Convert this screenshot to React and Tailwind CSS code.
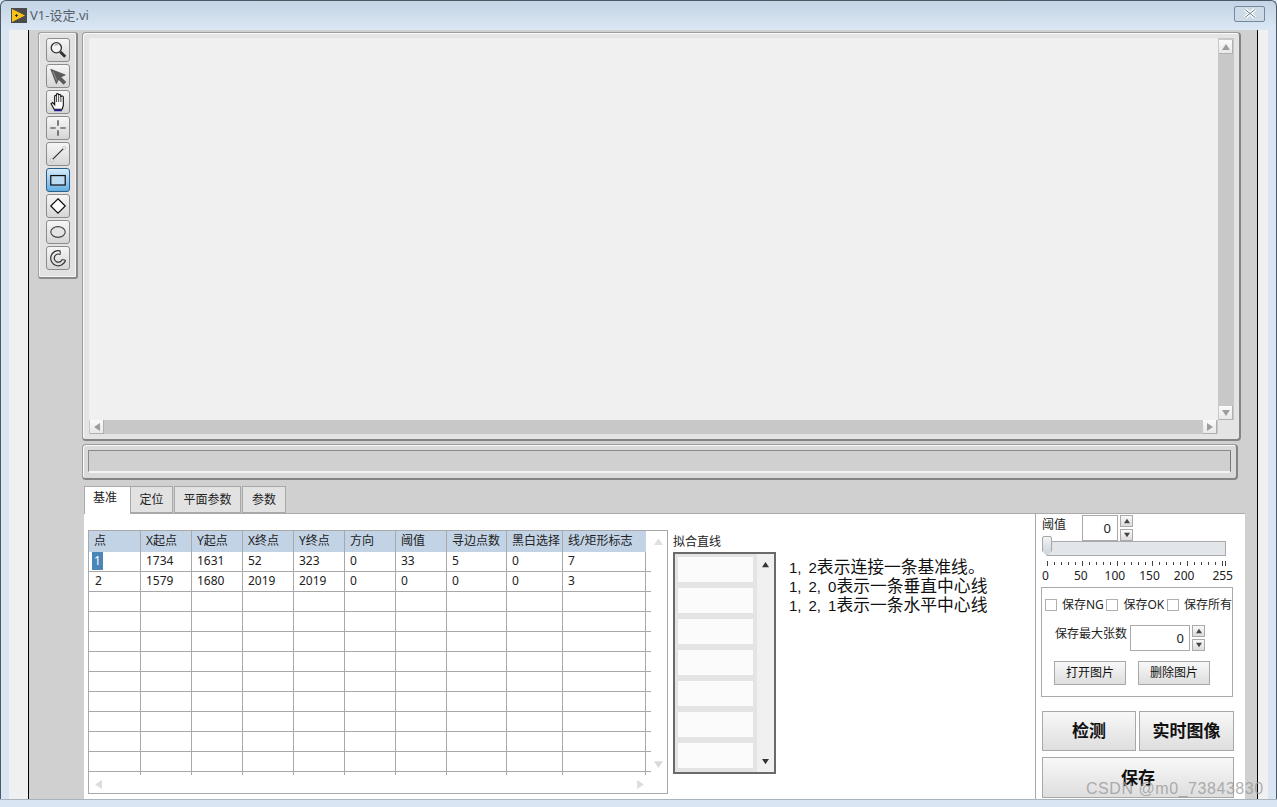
const ui = "font-['Noto_Sans','Noto_Sans_CJK_SC',sans-serif]";
const colsClass = "grid grid-cols-[52px_51px_51px_51px_51px_51px_51px_60px_56px_83px_3px]";
const header = ["点", "X起点", "Y起点", "X终点", "Y终点", "方向", "阈值", "寻边点数", "黑白选择", "线/矩形标志", ""];
const rows = [
  ["1", "1734", "1631", "52", "323", "0", "33", "5", "0", "7", ""],
  ["2", "1579", "1680", "2019", "2019", "0", "0", "0", "0", "3", ""],
  ...Array.from({ length: 9 }, () => Array(11).fill("")),
];

const Tool = ({ active, children }) => (
  <div className={`w-6 h-6 rounded-[3px] border flex items-center justify-center ${active ? "border-[#2a5f8a] bg-gradient-to-b from-[#d6ecfa] to-[#62aee4]" : "border-[#8c8c8c] bg-gradient-to-b from-[#f6f6f6] to-[#d6d6d6]"}`}>
    <svg width="20" height="20" viewBox="0 0 18 18" fill="none">{children}</svg>
  </div>
);

const Arrow = ({ dir, color = "#8a8a8a", size = 8 }) => {
  const p = { up: "4,1 8,7 0,7", down: "0,1 8,1 4,7", left: "7,0 7,8 1,4", right: "1,0 1,8 7,4" }[dir];
  return <svg width={size} height={size} viewBox="0 0 8 8"><polygon points={p} fill={color} /></svg>;
};

const ScrollBtn = ({ dir }) => (
  <div className="w-[14px] h-[14px] bg-gradient-to-b from-[#fafafa] to-[#e8e8e8] border-r border-b border-[#b0b0b0] flex items-center justify-center">
    <Arrow dir={dir} color="#9a9da0" />
  </div>
);

const Spinner = ({ cls = "" }) => (
  <div className={`w-[13px] flex flex-col justify-between h-[26px] ${cls}`}>
    <div className="h-3 border border-[#aaa] bg-gradient-to-b from-[#fafafa] to-[#dcdcdc] flex items-center justify-center"><Arrow dir="up" color="#444" size={6} /></div>
    <div className="h-3 border border-[#aaa] bg-gradient-to-b from-[#fafafa] to-[#dcdcdc] flex items-center justify-center"><Arrow dir="down" color="#444" size={6} /></div>
  </div>
);

const Check = ({ cls = "" }) => <div className={`w-[12px] h-[12px] border border-[#b0b0b0] bg-white shrink-0 ${cls}`} />;

const Btn = ({ cls, children }) => (
  <div className={`border border-[#a8a8a8] bg-gradient-to-b from-[#f8f8f8] to-[#dedede] flex items-center justify-center text-[#111] ${cls}`}>{children}</div>
);

const Nums = ({ items }) => (
  <span className="font-['Liberation_Sans',sans-serif] text-[15px] leading-none">
    {items.map((d, i) => (
      <span key={i}>{d}{i < items.length - 1 && <span className="mr-[7px]">,</span>}</span>
    ))}
  </span>
);

const Note = ({ items, text }) => (
  <div className="h-[19px] leading-[19px]"><Nums items={items} />{text}</div>
);

export default function App() {
  return (
    <div className={`relative w-[1277px] h-[807px] overflow-hidden bg-[#d9e5f2] ${ui} text-[12px] text-[#222]`}>
      {/* title bar */}
      <div className="h-[30px] flex items-center pl-[10px] pr-[11px] rounded-t-[6px] border-t border-x border-[#4e5963] bg-gradient-to-b from-[#c3d4e6] to-[#dbe7f3]">
        <div className="w-[16px] h-[15px] bg-[#4b4b4b] flex items-center justify-center">
          <svg width="16" height="15" viewBox="0 0 16 15"><polygon points="1,1 14,7.5 1,14" fill="#f8c21a" /><rect x="4" y="7" width="3" height="1" fill="#333" /><rect x="5" y="6" width="1" height="3" fill="#333" /></svg>
        </div>
        <span className="ml-[3px] text-[13px] text-[#56606a]">V1-设定.vi</span>
        <div className="ml-auto w-[31px] h-[16px] mt-[-4px] rounded-[2px] border border-[#76899c] flex items-center justify-center bg-[#cddbe9]">
          <svg width="14" height="11" viewBox="0 0 14 11"><path d="M2 1.5 L12 9.5 M12 1.5 L2 9.5" stroke="#fff" strokeWidth="3.4" /><path d="M2 1.5 L12 9.5 M12 1.5 L2 9.5" stroke="#727e8a" strokeWidth="1" /></svg>
        </div>
      </div>

      {/* body */}
      <div className="h-[769px] flex pl-[8px] border-x border-[#4e5963] box-border">
        <div className="w-[19px] bg-[#f0f0f0]" />
        <div className="w-[1230px] border-x border-black bg-[#d0d0d0] flex pl-[9px] pt-[2px]">
          {/* toolbar */}
          <div className="w-[40px] h-[247px] rounded-[3px] border border-[#a2a2a2] border-b-2 border-r-2 border-b-[#8a8a8a] border-r-[#8a8a8a] bg-[#e2e2e2] flex flex-col items-center gap-[2px] pt-[5px] shadow-[inset_0_0_0_1px_#f3f3f3]">
            <Tool>
              <circle cx="7.5" cy="7" r="4.6" fill="#f4f4f4" stroke="#333" strokeWidth="1.2" /><path d="M6 5 A2.5 2.5 0 0 1 9 4.5" stroke="#aaa" strokeWidth="1" /><path d="M11 10.5 L15.5 15" stroke="#333" strokeWidth="2.6" />
            </Tool>
            <Tool>
              <path d="M2.5 3 L15.5 8 L11.5 10 L16 14.5 L14 16.5 L9.5 12 L7.5 16 Z" fill="#5c5c5c" stroke="#444" strokeWidth="0.6" />
              <path d="M4.5 5 L7.8 13" stroke="#8a8a8a" strokeWidth="1" />
            </Tool>
            <Tool>
              <path d="M5.5 15.5 L2.8 10.5 L4.2 9.5 L6 11.5 V3.5 A1 1 0 0 1 7.5 3.5 V2.5 A1 1 0 0 1 9.5 2.5 V3 A1 1 0 0 1 11.5 3.5 V4.5 A1 1 0 0 1 13.8 5 V12 L12.8 15.5 Z" fill="#fff" stroke="#111" strokeWidth="1" />
              <path d="M7.7 4 V9 M9.6 3 V9 M11.6 4 V9" stroke="#111" strokeWidth="0.7" />
              <path d="M5.5 16.5 H12.5" stroke="#1c1a8c" strokeWidth="1.6" />
            </Tool>
            <Tool>
              <path d="M9 2 V7 M9 11 V16 M2 9 H7 M11 9 H16" stroke="#333" strokeWidth="1.1" />
            </Tool>
            <Tool>
              <path d="M3.5 14.5 L14.5 3.5" stroke="#333" strokeWidth="1.1" /><circle cx="3.5" cy="14.5" r="1.3" fill="#fff" stroke="#999" strokeWidth="0.5" /><circle cx="14.5" cy="3.5" r="1.3" fill="#fff" stroke="#999" strokeWidth="0.5" />
            </Tool>
            <Tool active>
              <rect x="2.5" y="5" width="13" height="8.5" fill="#bcdcf2" stroke="#111" strokeWidth="1.1" />
            </Tool>
            <Tool>
              <path d="M9 2.5 L15.5 9 L9 15.5 L2.5 9 Z" fill="#fff" stroke="#111" strokeWidth="1.1" />
            </Tool>
            <Tool>
              <ellipse cx="9" cy="9" rx="6.5" ry="4.8" fill="#e4e4e4" stroke="#444" strokeWidth="1" />
            </Tool>
            <Tool>
              <path d="M11 2.6 A6.8 6.8 0 1 0 15.8 11" stroke="#333" strokeWidth="1.1" />
              <path d="M11 5.8 A3.7 3.7 0 1 0 12.8 10.4" stroke="#333" strokeWidth="1.1" />
              <path d="M11 2.6 V5.8 M15.8 11 L12.8 10.4" stroke="#333" strokeWidth="0.9" />
            </Tool>
          </div>

          <div className="ml-[4px] w-[1163px] flex flex-col">
            {/* image panel */}
            <div className="w-[1159px] h-[409px] rounded-[4px] border border-[#9c9c9c] border-r-2 border-b-2 border-r-[#848484] border-b-[#848484] bg-[#e4e4e4] pt-[5px] pl-[6px] flex flex-col shadow-[inset_1px_1px_0_#fafafa]">
              <div className="flex h-[382px]">
                <div className="w-[1129px] bg-[#f0f0f0]" />
                <div className="w-[16px] bg-[#c8c8c8] flex flex-col justify-between items-center pt-[2px]">
                  <ScrollBtn dir="up" />
                  <ScrollBtn dir="down" />
                </div>
              </div>
              <div className="w-[1129px] h-[14px] bg-[#c8c8c8] flex justify-between px-[1px]">
                <ScrollBtn dir="left" />
                <ScrollBtn dir="right" />
              </div>
            </div>
            {/* status bar */}
            <div className="mt-[3px] w-[1156px] h-[36px] rounded-[4px] border border-[#9c9c9c] border-r-2 border-b-2 border-r-[#848484] border-b-[#848484] bg-[#dadada] p-[5px] shadow-[inset_1px_1px_0_#fafafa]">
              <div className="w-[1143px] h-[23px] bg-[#d0d0d0] border-t border-l border-[#8a8a8a] border-r border-b-2 border-b-[#f4f4f4] border-r-[#777]" />
            </div>
            {/* tabs */}
            <div className="mt-[6px] ml-[2px] h-[27px] flex items-stretch text-[12px]">
              <div className="w-[46px] h-[28px] bg-white border-t border-l border-[#aaa] flex items-center justify-center pb-[5px] pr-[5px] z-10">基准</div>
              <div className="w-[43px] bg-[#e2e2e2] border border-[#a8a8a8] flex items-center justify-center">定位</div>
              <div className="ml-[1px] w-[67px] bg-[#e2e2e2] border border-[#a8a8a8] flex items-center justify-center">平面参数</div>
              <div className="ml-[1px] w-[44px] bg-[#e2e2e2] border border-[#a8a8a8] flex items-center justify-center">参数</div>
            </div>
            {/* white panel */}
            <div className="ml-[2px] w-[1161px] h-[286px] bg-white flex border-t border-[#aaa]">
              <div className="w-[952px] pl-[4px] pt-[16px] flex border-r border-[#a8a8a8] shrink-0">
                {/* table frame */}
                <div className="w-[580px] h-[264px] border border-[#a8a8a8] flex flex-col shrink-0">
                  <div className="flex h-[244px]">
                    <div className="w-[560px] flex flex-col">
                      <div className={`${colsClass} h-[21px]`}>
                        {header.map((h, i) => (
                          <div key={i} className={`bg-[#c2d3e6] pl-[5px] pt-[1px] leading-[18px] whitespace-nowrap overflow-hidden ${i < 9 ? "border-r border-[#a8a8a8]" : ""} ${i === 10 ? "bg-white" : ""}`}>{h}</div>
                        ))}
                      </div>
                      {rows.map((r, ri) => (
                        <div key={ri} className={`${colsClass} h-[20px]`}>
                          {r.map((c, ci) => (
                            <div key={ci} className={`border-b border-[#a8a8a8] ${ci < 10 ? "border-r" : ""} ${ci === 0 ? "pl-[3px]" : "pl-[5px]"} leading-[18px]`}>
                              {ci === 0 && c === "1" ? (
                                <span className="block w-[11px] h-[18px] bg-[#4a86b8] text-white text-center">1</span>
                              ) : ci === 0 && c ? (
                                <span className="pl-[3px]">{c}</span>
                              ) : c}
                            </div>
                          ))}
                        </div>
                      ))}
                      <div className={`${colsClass} h-[3px]`}>
                        {header.map((_, i) => <div key={i} className={i < 10 ? "border-r border-[#a8a8a8]" : ""} />)}
                      </div>
                    </div>
                    <div className="w-[18px] flex flex-col justify-between items-center py-[6px]">
                      <Arrow dir="up" color="#e0e0e0" size={9} />
                      <Arrow dir="down" color="#d8d8d8" size={9} />
                    </div>
                  </div>
                  <div className="flex-1 flex items-center justify-between pl-[5px] pr-[22px]">
                    <Arrow dir="left" color="#dcdcdc" size={9} />
                    <Arrow dir="right" color="#dcdcdc" size={9} />
                  </div>
                </div>
                {/* list box */}
                <div className="ml-[5px] w-[103px] shrink-0">
                  <div className="h-[22px] leading-[24px] text-[12px] text-[#222]">拟合直线</div>
                  <div className="w-[103px] h-[222px] border-2 border-[#6a6a6a] flex">
                    <div className="w-[82px] bg-[#e4e4e4] pl-[3px] pt-[3px] flex flex-col gap-[6px]">
                      {[0, 1, 2, 3, 4, 5, 6].map((i) => <div key={i} className="w-[75px] h-[25px] bg-[#fbfbfb]" />)}
                    </div>
                    <div className="flex-1 bg-[#f0f0f0] flex flex-col justify-between items-center py-[7px]">
                      <Arrow dir="up" color="#333" size={7} />
                      <Arrow dir="down" color="#333" size={7} />
                    </div>
                  </div>
                </div>
                {/* notes */}
                <div className="ml-[13px] pt-[27px] text-[16.8px] text-[#111] whitespace-nowrap">
                  <Note items={["1", "2"]} text="表示连接一条基准线。" />
                  <Note items={["1", "2", "0"]} text="表示一条垂直中心线" />
                  <Note items={["1", "2", "1"]} text="表示一条水平中心线" />
                </div>
              </div>

              {/* right controls */}
              <div className="flex-1 pl-[6px] pt-[1px]">
                <div className="flex h-[26px]">
                  <div className="w-[40px] leading-[20px]">阈值</div>
                  <div className="w-[36px] h-[26px] border border-[#aaa] text-right pr-[6px] leading-[24px] text-[13px]">0</div>
                  <Spinner cls="ml-[2px]" />
                </div>
                <div className="relative h-[15px] ml-[5px] w-[179px] bg-[#e2e6ea] border border-[#aaa]">
                  <div className="absolute left-[-6px] top-[-6px] w-[10px] h-[20px] rounded-t-[2px] bg-gradient-to-b from-[#f2f2f2] to-[#c9d4dd] border border-[#a6a6a6] [clip-path:polygon(0_0,100%_0,100%_75%,50%_100%,0_75%)]" />
                </div>
                <svg width="190" height="6" viewBox="0 0 190 6" className="block mt-[5px] ml-[4px]">
                  {Array.from({ length: 26 }, (_, i) => (
                    <rect key={i} x={Math.round(i * 6.98) + 1} y={i % 5 === 0 ? 0 : 1} width="1" height={i % 5 === 0 ? 5 : 3} fill="#444" />
                  ))}
                  <rect x="179" y="0" width="1" height="5" fill="#444" />
                </svg>
                <div className="flex h-[15px] mt-[1px] leading-[15px] text-[12px]">
                  <span>0</span>
                  <span className="ml-[25px]">50</span>
                  <span className="ml-[17px]">100</span>
                  <span className="ml-[14px]">150</span>
                  <span className="ml-[14px]">200</span>
                  <span className="ml-[18px]">255</span>
                </div>
                {/* save box */}
                <div className="mt-[4px] -ml-[1px] w-[192px] h-[110px] border border-[#aaa] flex flex-col">
                  <div className="flex items-center h-[18px] mt-[8px] pl-[3px] whitespace-nowrap">
                    <Check />
                    <span className="ml-[5px] w-[45px]">保存NG</span>
                    <Check />
                    <span className="ml-[5px] w-[44px]">保存OK</span>
                    <Check />
                    <span className="ml-[5px]">保存所有</span>
                  </div>
                  <div className="flex mt-[11px] pl-[13px] h-[26px]">
                    <div className="w-[75px] leading-[18px]">保存最大张数</div>
                    <div className="w-[60px] h-[26px] border border-[#aaa] text-right pr-[5px] leading-[24px] text-[13px]">0</div>
                    <Spinner cls="ml-[2px]" />
                  </div>
                  <div className="flex mt-[10px] pl-[12px]">
                    <Btn cls="w-[72px] h-[24px]">打开图片</Btn>
                    <Btn cls="ml-[12px] w-[72px] h-[24px]">删除图片</Btn>
                  </div>
                </div>
                {/* large buttons */}
                <div className="flex mt-[14px]">
                  <Btn cls="w-[94px] h-[40px] text-[17px] font-bold">检测</Btn>
                  <Btn cls="ml-[3px] w-[95px] h-[40px] text-[17px] font-bold">实时图像</Btn>
                </div>
                <Btn cls="mt-[6px] w-[192px] h-[41px] text-[17px] font-bold">保存</Btn>
              </div>
            </div>
          </div>
        </div>
        <div className="w-[10px] bg-[#f0f0f0]" />
      </div>
      <div className="border-t border-[#a8b4c0] h-[8px]" />
      <div className="absolute left-[1086px] top-[779px] text-[16px] leading-[20px] tracking-[0.55px] text-[#9a9a9a]/80 font-['Liberation_Sans',sans-serif] whitespace-nowrap">CSDN @m0_73843830</div>
    </div>
  );
}
